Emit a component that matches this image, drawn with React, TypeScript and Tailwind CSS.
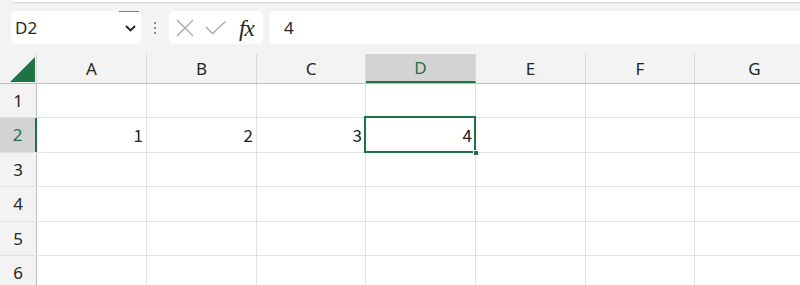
import React from "react";

const cols = [
  { l: "A", w: 110 },
  { l: "B", w: 110 },
  { l: "C", w: 109 },
  { l: "D", w: 110 },
  { l: "E", w: 110 },
  { l: "F", w: 109 },
  { l: "G", w: 120 },
];
const rowH = [34, 35, 34, 35, 34, 35];
const data: Record<string, string> = { "2-0": "1", "2-1": "2", "2-2": "3", "2-3": "4" };

export default function App() {
  return (
    <div className="w-[800px] h-[285px] overflow-hidden bg-[#f3f3f3] relative" style={{ fontFamily: '"Noto Sans", "Liberation Sans", sans-serif' }}>
      <div className="h-[3px] ml-[13px] bg-white border-b border-[#d4d4d4] rounded-bl-[3px]" />
      {/* formula toolbar */}
      <div className="flex items-center h-[33px] mt-[8px] pl-[11px]">
        <div className="relative w-[130px] h-[33px] bg-white rounded-[5px] flex items-center pl-[4px] pr-[6px]">
          <span className="text-[17px] text-[#262626] leading-none">D2</span>
          <div className="absolute top-0 left-[108px] w-[20px] h-[1px] bg-[#7a7a7a]" />
          <svg className="absolute left-[114px] top-[14px]" width="11" height="7" viewBox="0 0 11 7">
            <path d="M1 1 L5.5 5.5 L10 1" fill="none" stroke="#222" strokeWidth="1.8" />
          </svg>
        </div>
        <div className="w-[28px] flex flex-col items-center gap-[3px]">
          <div className="w-[2px] h-[2px] bg-[#8a8a8a]" />
          <div className="w-[2px] h-[2px] bg-[#8a8a8a]" />
          <div className="w-[2px] h-[2px] bg-[#8a8a8a]" />
        </div>
        <div className="w-[94px] h-[33px] bg-white rounded-[5px] relative">
          <svg className="absolute left-[7px] top-[8px]" width="18" height="18" viewBox="0 0 18 18">
            <path d="M1 1 L17 17 M17 1 L1 17" stroke="#a8a8a8" strokeWidth="1.3" fill="none" />
          </svg>
          <svg className="absolute left-[36px] top-[10px]" width="22" height="14" viewBox="0 0 22 14">
            <path d="M1 6 L7.5 12.5 L20.5 0.5" stroke="#a8a8a8" strokeWidth="1.3" fill="none" />
          </svg>
          <span className="absolute left-[70px] top-[6px] text-[23px] italic text-[#222] leading-none" style={{ fontFamily: '"Liberation Serif", serif' }}>
            <span className="tracking-[-1px]">f</span>x
          </span>
        </div>
        <div className="ml-[6px] flex-1 h-[33px] bg-white rounded-l-[5px] flex items-center pl-[15px]">
          <span className="text-[17px] text-[#262626] leading-none">4</span>
        </div>
      </div>
      {/* grid */}
      <div className="mt-[10px]">
        <div className="flex h-[30px] border-b border-[#bdbdbd]">
          <div className="w-[37px] shrink-0 relative border-r border-[#d9d9d9]">
            <svg className="absolute left-[10px] top-[3px]" width="26" height="26" viewBox="0 0 26 26">
              <path d="M0 25 L25 0 L25 25 Z" fill="#1f7244" />
            </svg>
          </div>
          {cols.map((c, i) => (
            <div
              key={c.l}
              className={`shrink-0 flex items-center justify-center text-[17px] ${i === 3 ? "bg-[#d3d3d3] text-[#1f7244] border-b-2 border-[#1f7244] border-r border-r-[#d9d9d9]" : "text-[#262626] border-r border-[#d9d9d9]"}`}
              style={{ width: c.w }}
            >
              {c.l}
            </div>
          ))}
        </div>
        {rowH.map((h, r) => (
          <div key={r} className="flex border-b border-[#e1e1e1]" style={{ height: h }}>
            <div
              className={`w-[37px] shrink-0 flex items-center justify-center text-[17px] ${r === 1 ? "bg-[#d3d3d3] text-[#1f7244] border-r-2 border-[#1f7244]" : "bg-[#f3f3f3] text-[#262626] border-r border-[#bdbdbd]"}`}
            >
              {r + 1}
            </div>
            {cols.map((c, ci) => {
              const v = data[`${r + 1}-${ci}`];
              const sel = r === 1 && ci === 3;
              return (
                <div
                  key={c.l}
                  className="shrink-0 relative bg-white border-r border-[#e1e1e1] flex items-center justify-end pr-[3px] text-[17px] text-[#222]"
                  style={{ width: c.w, fontFamily: '"Noto Sans CJK JP", sans-serif' }}
                >
                  {v}
                  {sel && (
                    <>
                      <div className="absolute z-10 left-[-2px] top-[-2px] right-[-1px] bottom-[-1px] border-2 border-[#1f7244]" />
                      <div className="absolute z-20 right-[-4px] bottom-[-4px] w-[6px] h-[6px] bg-[#1f7244] border border-white" />
                    </>
                  )}
                </div>
              );
            })}
          </div>
        ))}
      </div>
    </div>
  );
}
